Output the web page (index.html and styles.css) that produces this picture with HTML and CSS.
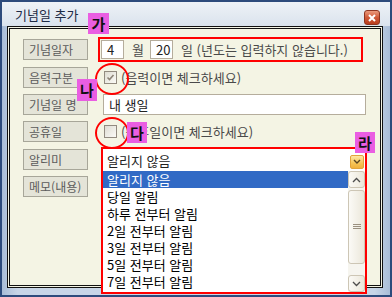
FILE: index.html
```html
<!DOCTYPE html>
<html lang="ko">
<head>
  <meta charset="UTF-8">
  <title>기념일 추가</title>
  <link rel="stylesheet" href="styles.css">
</head>
<body>
  <div class="window">
    <div class="titlebar">
      <span class="title">기념일 추가</span>
      <span class="close">
        <svg width="8" height="8" viewBox="0 0 8 8"><path d="M1 1 L7 7 M7 1 L1 7" stroke="#fff" stroke-width="2"/></svg>
      </span>
    </div>

    <div class="panel">
      <div class="row">
        <div class="label">기념일자</div>
        <div class="date-box">
          <span class="num">4</span>
          <span class="unit">월</span>
          <span class="num">20</span>
          <span class="unit">일 (년도는 입력하지 않습니다.)</span>
        </div>
      </div>

      <div class="row gap7">
        <div class="label">음력구분</div>
        <span class="check circled">
          <svg width="11" height="11" viewBox="0 0 11 11"><path d="M2.5 5.5 L4.5 7.5 L8.5 3" fill="none" stroke="#8c8377" stroke-width="1.6"/></svg>
        </span>
        <span class="hint">(음력이면 체크하세요)</span>
      </div>

      <div class="row">
        <div class="label">기념일 명</div>
        <div class="text-input">내 생일</div>
      </div>

      <div class="row">
        <div class="label">공휴일</div>
        <span class="check circled"></span>
        <span class="hint">(공휴일이면 체크하세요)</span>
      </div>

      <div class="row gap7 top">
        <div class="label">알리미</div>
        <div class="select-box">
          <div class="select">
            <span>알리지 않음</span>
            <span class="arrow">
              <svg width="8" height="6" viewBox="0 0 8 6"><path d="M1 1 L4 4 L7 1" fill="none" stroke="#5a4420" stroke-width="1.4"/></svg>
            </span>
          </div>
          <div class="list">
            <div class="items">
              <div class="item active">알리지 않음</div>
              <div class="item">당일 알림</div>
              <div class="item">하루 전부터 알림</div>
              <div class="item">2일 전부터 알림</div>
              <div class="item">3일 전부터 알림</div>
              <div class="item">5일 전부터 알림</div>
              <div class="item">7일 전부터 알림</div>
            </div>
            <div class="scrollbar">
              <span class="sbtn">
                <svg width="9" height="6" viewBox="0 0 9 6"><path d="M1 5 L4.5 1.5 L8 5" fill="none" stroke="#4d4d4d" stroke-width="1.3"/></svg>
              </span>
              <span class="thumb">
                <svg width="8" height="6" viewBox="0 0 8 6"><path d="M0 0.5 H8 M0 2.5 H8 M0 4.5 H8" stroke="#9a9080" stroke-width="1"/></svg>
              </span>
              <span class="track"></span>
              <span class="sbtn">
                <svg width="9" height="6" viewBox="0 0 9 6"><path d="M1 1 L4.5 4.5 L8 1" fill="none" stroke="#4d4d4d" stroke-width="1.3"/></svg>
              </span>
            </div>
          </div>
        </div>
      </div>

      <div class="row">
        <div class="label">메모(내용)</div>
      </div>
    </div>

    <span class="badge badge-ga">가</span>
    <span class="badge badge-na">나</span>
    <span class="badge badge-da">다</span>
    <span class="badge badge-ra">라</span>
  </div>
</body>
</html>
```

FILE: styles.css
```css
* {
  box-sizing: border-box;
}

body {
  margin: 0;
  font-family: "Noto Sans CJK KR", "Noto Sans", sans-serif;
  font-size: 13px;
  color: #222;
  background: #fff;
}

.window {
  position: relative;
  width: 392px;
  height: 297px;
  display: flex;
  flex-direction: column;
  padding: 0 7px 7px 5px;
  border: 2px solid #2d4b7c;
  background: linear-gradient(90deg, #a9bdd7, #c7d5e7 4%, #c7d5e7 96%, #a9bdd7);
}

.titlebar {
  height: 24px;
  margin: 0 -7px 0 -5px;
  padding: 0 10px 0 13px;
  display: flex;
  align-items: center;
  background: linear-gradient(#eef2f7, #dae3ed);
}

.title {
  font-size: 13px;
  line-height: 16px;
  color: #1e2b45;
  margin-top: 1px;
}

.close {
  margin-left: auto;
  align-self: flex-end;
  margin-bottom: 1px;
  width: 16px;
  height: 15px;
  display: flex;
  align-items: center;
  justify-content: center;
  border: 1px solid #8e3520;
  border-radius: 3px;
  background: linear-gradient(#eb9a7c, #d05a38 50%, #b93e1f);
}

.panel {
  flex: 1;
  padding: 10px 0 0 13px;
  border: 3px double #111;
  background: #f4f4e4;
}

.row {
  display: flex;
  align-items: center;
  height: 21px;
  margin-bottom: 6px;
}

.row.gap7 {
  margin-top: 7px;
  margin-bottom: 0;
}

.row.gap7 + .row {
  margin-top: 6px;
}

.row.top {
  align-items: flex-start;
}

.label {
  flex: none;
  width: 65px;
  height: 21px;
  margin-right: 15px;
  padding-left: 5px;
  border: 1px solid #a7a699;
  background: #e4e4d8;
  color: #5b5b5b;
  font-size: 12px;
  line-height: 19px;
  white-space: nowrap;
}

.date-box {
  display: flex;
  align-items: center;
  width: 265px;
  height: 25px;
  margin-left: -5px;
  padding-left: 1px;
  border: 2px solid #f00;
  color: #4a4a4a;
}

.num {
  width: 23px;
  height: 19px;
  padding-left: 5px;
  border: 1px solid #b5ad9c;
  background: #fff;
  color: #222;
  line-height: 17px;
}

.unit {
  margin: 0 6px 0 8px;
  white-space: nowrap;
}

.check {
  position: relative;
  width: 13px;
  height: 13px;
  margin-left: 1px;
  display: flex;
  align-items: center;
  justify-content: center;
  border: 1px solid #928b80;
  background: linear-gradient(135deg, #dedcd2, #fbfbf7);
}

.check.circled::after {
  content: "";
  position: absolute;
  left: -10px;
  top: -9px;
  width: 30px;
  height: 28px;
  border: 2px solid #f00;
  border-radius: 50%;
}

.hint {
  margin-left: 4px;
  color: #4a4a4a;
  white-space: nowrap;
}

.text-input {
  width: 263px;
  height: 21px;
  padding-left: 5px;
  border: 1px solid #b5ad9c;
  background: #fff;
  line-height: 19px;
}

.select-box {
  width: 266px;
  margin-top: -2px;
  margin-left: -2px;
  border: 2px solid #f00;
}

.select {
  height: 22px;
  display: flex;
  align-items: center;
  padding-left: 4px;
  background: #fff;
}

.arrow {
  margin-left: auto;
  margin-right: 1px;
  align-self: flex-end;
  margin-bottom: 2px;
  width: 14px;
  height: 14px;
  display: flex;
  align-items: center;
  justify-content: center;
  border: 1px solid #e2a43c;
  border-radius: 2px;
  background: linear-gradient(#fde9a6, #f6c456 60%, #f0b13c);
}

.list {
  display: flex;
  height: 121px;
  background: #fff;
}

.items {
  flex: 1;
}

.item {
  height: 17px;
  padding-left: 4px;
  line-height: 17px;
  color: #000;
  white-space: nowrap;
}

.item.active {
  background: #316ac5;
  color: #fff;
}

.scrollbar {
  width: 17px;
  display: flex;
  flex-direction: column;
  background: #f6f5ef;
}

.sbtn,
.thumb {
  display: flex;
  align-items: center;
  justify-content: center;
  border: 1px solid #cdc6b5;
  border-radius: 3px;
  background: linear-gradient(90deg, #fbfaf6, #ebe7da);
}

.sbtn {
  height: 17px;
}

.thumb {
  height: 74px;
  margin-top: 2px;
}

.track {
  flex: 1;
}

.badge {
  position: absolute;
  width: 21px;
  height: 21px;
  background: #ea5ee2;
  color: #111;
  font-size: 15px;
  font-weight: bold;
  line-height: 21px;
  text-align: center;
}

.badge-ga {
  left: 86px;
  top: 11px;
}

.badge-na {
  left: 75px;
  top: 77px;
  width: 20px;
  height: 22px;
}

.badge-da {
  left: 125px;
  top: 120px;
  width: 20px;
}

.badge-ra {
  left: 353px;
  top: 130px;
  width: 20px;
}
```
